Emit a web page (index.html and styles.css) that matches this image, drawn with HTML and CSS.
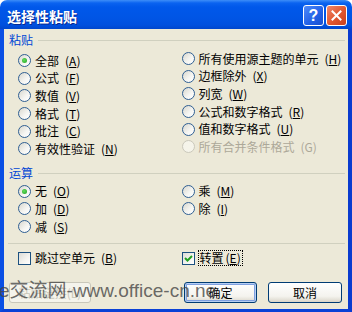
FILE: index.html
```html
<!DOCTYPE html>
<html>

<head>
  <title>选择性粘贴</title>
  <link rel="stylesheet" href="styles.css">
</head>

<body>
  <div class="window">
    <div class="titlebar">
      <span class="title">选择性粘贴</span>
      <div class="caption-buttons">
        <span class="cap-btn help">?</span>
        <span class="cap-btn close">
          <svg width="11" height="11" viewBox="0 0 11 11">
            <path d="M1.5 1.5 L9.5 9.5 M9.5 1.5 L1.5 9.5" stroke="#fff" stroke-width="2" stroke-linecap="square" fill="none"/>
          </svg>
        </span>
      </div>
    </div>

    <div class="client">
      <div class="group-title"><span>粘贴</span><i></i></div>
      <div class="options paste">
        <div class="col">
          <div class="opt"><span class="radio on"></span>全部<span class="key">(<u>A</u>)</span></div>
          <div class="opt"><span class="radio"></span>公式<span class="key">(<u>F</u>)</span></div>
          <div class="opt"><span class="radio"></span>数值<span class="key">(<u>V</u>)</span></div>
          <div class="opt"><span class="radio"></span>格式<span class="key">(<u>T</u>)</span></div>
          <div class="opt"><span class="radio"></span>批注<span class="key">(<u>C</u>)</span></div>
          <div class="opt"><span class="radio"></span>有效性验证<span class="key">(<u>N</u>)</span></div>
        </div>
        <div class="col col-right">
          <div class="opt"><span class="radio"></span>所有使用源主题的单元<span class="key">(<u>H</u>)</span></div>
          <div class="opt"><span class="radio"></span>边框除外<span class="key">(<u>X</u>)</span></div>
          <div class="opt"><span class="radio"></span>列宽<span class="key">(<u>W</u>)</span></div>
          <div class="opt"><span class="radio"></span>公式和数字格式<span class="key">(<u>R</u>)</span></div>
          <div class="opt"><span class="radio"></span>值和数字格式<span class="key">(<u>U</u>)</span></div>
          <div class="opt disabled"><span class="radio"></span>所有合并条件格式<span class="key">(G)</span></div>
        </div>
      </div>

      <div class="group-title calc"><span>运算</span><i></i></div>
      <div class="options ops">
        <div class="col">
          <div class="opt"><span class="radio on"></span>无<span class="key">(<u>O</u>)</span></div>
          <div class="opt"><span class="radio"></span>加<span class="key">(<u>D</u>)</span></div>
          <div class="opt"><span class="radio"></span>减<span class="key">(<u>S</u>)</span></div>
        </div>
        <div class="col">
          <div class="opt"><span class="radio"></span>乘<span class="key">(<u>M</u>)</span></div>
          <div class="opt"><span class="radio"></span>除<span class="key">(<u>I</u>)</span></div>
        </div>
      </div>

      <div class="separator"></div>

      <div class="options checks">
        <div class="col">
          <div class="opt"><span class="check"></span>跳过空单元<span class="key">(<u>B</u>)</span></div>
        </div>
        <div class="col">
          <div class="opt">
            <span class="check on">
              <svg width="11" height="11" viewBox="0 0 11 11">
                <path d="M2 5 L4.5 7.5 L9 3" stroke="#21A121" stroke-width="2" fill="none"/>
              </svg>
            </span>
            <span class="focus">转置<span class="key">(<u>E</u>)</span></span>
          </div>
        </div>
      </div>

      <div class="buttons">
        <button class="btn disabled">粘贴链接(L)</button>
        <button class="btn default">确定</button>
        <button class="btn cancel">取消</button>
      </div>
    </div>

    <div class="watermark">e交流网-www.office-cn.ne</div>
  </div>
</body>

</html>
```

FILE: styles.css
```css
* {
  box-sizing: border-box;
  margin: 0;
  padding: 0;
}

html,
body {
  background: #ffffff;
}

.window {
  position: relative;
  width: 352px;
  height: 312px;
  display: flex;
  flex-direction: column;
  font-family: "Noto Sans CJK SC", sans-serif;
  font-size: 12px;
  color: #000;
  overflow: hidden;
}

/* title bar */
.titlebar {
  flex: none;
  height: 29px;
  display: flex;
  align-items: center;
  justify-content: space-between;
  padding: 2px 5px 0 7px;
  border-radius: 7px 7px 0 0;
  background: linear-gradient(#3D8EF8 0, #0A63F0 3px, #0058EA 7px, #0055E5 18px, #0050DE 25px, #0046CC 29px);
}

.title {
  color: #fff;
  font-weight: bold;
  font-size: 14px;
  line-height: 16px;
  text-shadow: 1px 1px 0 #0A2A90;
}

.caption-buttons {
  display: flex;
  gap: 2px;
}

.cap-btn {
  width: 21px;
  height: 21px;
  border: 1px solid #fff;
  border-radius: 3px;
  display: flex;
  align-items: center;
  justify-content: center;
  color: #fff;
}

.help {
  background: linear-gradient(135deg, #4F8BFA, #2160E6 60%, #1A4FCF);
  font-family: "Liberation Sans", sans-serif;
  font-weight: bold;
  font-size: 16px;
  line-height: 1;
}

.close {
  background: linear-gradient(135deg, #F0876A, #E0562F 55%, #C8401E);
}

/* client area */
.client {
  flex: 1;
  background: #ECE9D8;
  border-style: solid;
  border-width: 0 4px 3px 4px;
  border-color: #0A4FE4 #0A3BCF #0A41D6 #0A4FE4;
  padding: 5px 3px 0 5px;
}

.group-title {
  display: flex;
  align-items: center;
  height: 12px;
  line-height: 12px;
  color: #0046D5;
}

.group-title i {
  flex: 1;
  height: 1px;
  margin-left: 5px;
  margin-top: 1px;
  background: #D0D0BF;
}

.group-title.calc {
  margin-top: 9px;
}

.options {
  display: flex;
  padding-left: 9px;
}

.options .col {
  width: 166px;
  display: flex;
  flex-direction: column;
}

.options .col-right {
  margin-top: -2px;
}

.paste {
  margin-top: 6px;
}

.ops {
  margin-top: 4px;
}

.opt {
  height: 17.6px;
  display: flex;
  align-items: center;
  gap: 4px;
  white-space: nowrap;
  line-height: 14px;
}

.key {
  margin-left: 2px;
}

.key u {
  text-underline-offset: 1px;
}

.opt.disabled {
  color: #ACA899;
}

.radio {
  flex: none;
  position: relative;
  width: 13px;
  height: 13px;
  border-radius: 50%;
  border: 1px solid #2F5F93;
  background: linear-gradient(135deg, #D8D7CE, #F6F6F3 60%, #FFFFFF);
}

.radio.on::after {
  content: "";
  position: absolute;
  left: 3px;
  top: 3px;
  width: 5px;
  height: 5px;
  border-radius: 50%;
  background: radial-gradient(circle at 40% 40%, #62DD5E, #21A121);
}

.opt.disabled .radio {
  border-color: #CAC8BB;
  background: #F5F4EA;
}

.separator {
  height: 1px;
  margin: 8px 0 0 -1px;
  background: #D0D0BF;
}

.checks {
  margin-top: 5px;
}

.check {
  flex: none;
  width: 13px;
  height: 13px;
  border: 1px solid #1C5180;
  background: linear-gradient(135deg, #DCDCD7, #F4F4F0 60%, #FFFFFF);
  display: flex;
  align-items: center;
  justify-content: center;
}

.focus {
  outline: 1px dotted #000;
  padding: 0 1px;
  line-height: 14px;
}

/* buttons */
.buttons {
  display: flex;
  margin-top: 15px;
  padding-right: 3px;
}

.btn {
  height: 21px;
  width: 74px;
  border: 1px solid #003C74;
  border-radius: 3px;
  background: linear-gradient(#FFFFFF, #F4F3EE 70%, #D9D5C9);
  font: inherit;
  color: #000;
  display: flex;
  align-items: center;
  justify-content: center;
}

.btn.disabled {
  width: 82px;
  border-color: #C9C7BA;
  background: #F5F4EC;
  color: #C9C7BA;
}

.btn.default {
  margin-left: auto;
  width: 73px;
  box-shadow: inset 0 0 0 1px #B7CFF3, inset 0 0 0 2px #7FA0E0;
}

.btn.cancel {
  margin-left: 11px;
}

/* site watermark laid over the dialog */
.watermark {
  position: absolute;
  left: -1px;
  top: 281px;
  font-family: "Liberation Sans", "Noto Sans CJK SC", sans-serif;
  font-size: 19px;
  line-height: 19px;
  color: rgba(70, 70, 70, 0.8);
  white-space: nowrap;
  pointer-events: none;
}
```
